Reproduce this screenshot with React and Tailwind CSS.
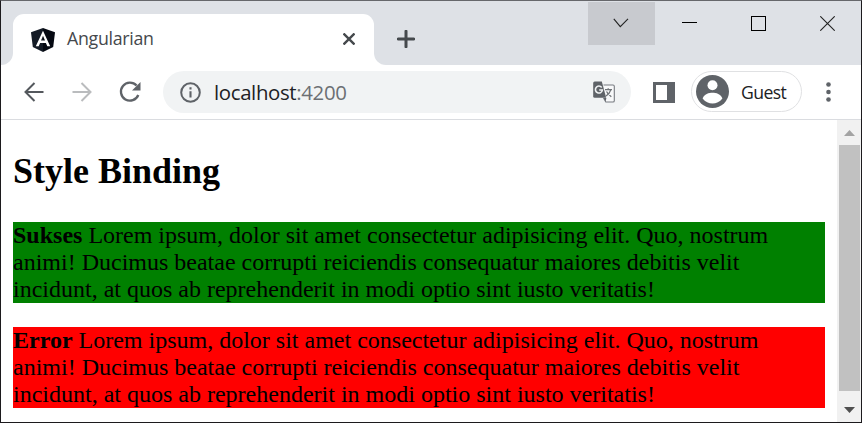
import React from "react";

const LOREM_TEXT =
  "Lorem ipsum, dolor sit amet consectetur adipisicing elit. Quo, nostrum animi! Ducimus beatae corrupti reiciendis consequatur maiores debitis velit incidunt, at quos ab reprehenderit in modi optio sint iusto veritatis!";

function AngularLogo() {
  return (
    <svg className="block h-6 w-6" viewBox="0 0 24 24">
      <path d="M12 0 L24 4.2 L22.2 19 L12 24 Z" fill="#050912" />
      <path d="M12 0 L0 4.2 L1.8 19 L12 24 Z" fill="#141b26" />
      <path
        fill="#fff"
        fillRule="evenodd"
        d="M12 2.8 L4.8 18.3 H7.7 L9.1 15 H14.9 L16.3 18.3 H19.2 Z M12 7.8 L14 12.6 H10 Z"
      />
    </svg>
  );
}

function TabStrip() {
  return (
    <div className="flex h-16 items-start bg-[#dee1e6]">
      <div className="flex h-16 w-3 items-end bg-white">
        <div className="h-16 w-3 rounded-br-[12px] bg-[#dee1e6]" />
      </div>
      <div className="mt-[13px] flex h-[51px] w-[361px] items-center rounded-t-[11px] bg-white pl-[18px] pr-[19px]">
        <AngularLogo />
        <span className="-mt-[3px] ml-[12px] flex-1 text-[17.8px] leading-6 tracking-[-0.3px] text-[#45484c]">Angularian</span>
        <svg className="-mt-px block h-3 w-3" viewBox="0 0 12 12" stroke="#45494d" strokeWidth="2.4">
          <path d="M0.5 0.5 L11.5 11.5 M11.5 0.5 L0.5 11.5" />
        </svg>
      </div>
      <div className="h-16 flex-1 bg-white">
        <div className="flex h-16 items-start rounded-bl-[12px] bg-[#dee1e6]">
          <svg className="ml-[23px] mt-[29px] block h-[18px] w-[18px]" viewBox="0 0 18 18" stroke="#45494d" strokeWidth="3" strokeLinecap="round">
            <path d="M1.2 9 H16.8 M9 1.2 V16.8" />
          </svg>
          <div className="ml-auto mt-px flex h-[43px] items-start">
            <div className="flex h-[43px] w-[67px] justify-center bg-[#c8cacf] pt-4">
              <svg className="-ml-px block h-[10px] w-4" viewBox="0 0 16 10" fill="none" stroke="#222" strokeWidth="1.1">
                <path d="M0.8 0.8 L7.3 8.6 L15 0.8" />
              </svg>
            </div>
            <div className="ml-[27px] mt-5 h-px w-[15px] bg-black" />
            <div className="ml-[54px] mt-[14px] h-[15px] w-[15px] border border-black" />
            <svg className="ml-[54px] mr-[26px] mt-[14px] block h-[15px] w-[15px]" viewBox="0 0 15 15" stroke="#222" strokeWidth="1.1">
              <path d="M0.3 0.3 L14.7 14.7 M14.7 0.3 L0.3 14.7" />
            </svg>
          </div>
        </div>
      </div>
    </div>
  );
}

function ArrowIcon({ className }) {
  return (
    <svg className={className} viewBox="0 0 20 20" fill="none" stroke="currentColor" strokeWidth="2">
      <path d="M19.5 10 H1.8 M10.5 1 L1.5 10 L10.5 19" />
    </svg>
  );
}

function TranslateIcon() {
  return (
    <svg className="block h-[22px] w-[22px]" viewBox="0 0 22 22">
      <path d="M10.5 4 H20 Q21.3 4 21.3 5.3 V19.7 Q21.3 21 20 21 H12.8 L10.5 17" fill="#f8f9fa" stroke="#777b80" strokeWidth="1.1" />
      <path d="M1.7 0.5 H8.8 L13.2 16.8 H1.7 Q0.2 16.8 0.2 15.3 V2 Q0.2 0.5 1.7 0.5 Z" fill="#5f6368" />
      <path d="M10.7 17 H13.4 L12.6 20.6 Z" fill="#5f6368" />
      <path d="M8.7 6.4 A3.5 3.5 0 1 0 9.4 9 H6.2" fill="none" stroke="#f1f3f4" strokeWidth="1.6" />
      <path d="M12 8.7 H19 M15.2 7.2 V8.7 M17.8 8.9 Q16.8 12.5 13 15 M13.5 10.5 Q15 13 18.3 15.8" fill="none" stroke="#6f7377" strokeWidth="1.3" />
    </svg>
  );
}

function Toolbar() {
  return (
    <div className="flex h-[55px] items-center border-b border-[#dadce0] bg-white">
      <ArrowIcon className="-mt-px ml-[23px] block h-5 w-5 text-[#54585d]" />
      <ArrowIcon className="-mt-px ml-[28px] block h-5 w-5 rotate-180 text-[#babcbe]" />
      <svg className="-mt-px ml-[27px] block h-[22px] w-[22px]" viewBox="0 0 22 22">
        <path d="M17.6 4.6 A9 9 0 1 0 19.3 14" fill="none" stroke="#5f6368" strokeWidth="2.3" />
        <path d="M21.5 1 V9.5 H13 Z" fill="#5f6368" />
      </svg>
      <div className="ml-[22px] flex h-[42px] w-[468px] items-center rounded-full bg-[#f1f3f4] pl-[17px] pr-4">
        <svg className="block h-[21px] w-[21px]" viewBox="0 0 21 21">
          <circle cx="10.5" cy="10.5" r="9.3" fill="none" stroke="#5f6368" strokeWidth="2" />
          <path d="M10.5 9.3 V15.5 M10.5 5.3 V7.5" stroke="#5f6368" strokeWidth="2.1" />
        </svg>
        <span className="ml-[13px] flex-1 text-[20.4px] leading-7 tracking-[-0.35px] text-[#202124]">
          localhost<span className="text-[#6b6f73]">:4200</span>
        </span>
        <TranslateIcon />
      </div>
      <div className="ml-[22px] h-[21px] w-[22px] border-y-[3px] border-l-[3px] border-r-[8px] border-[#5f6368]" />
      <div className="-mt-px ml-[16px] flex h-[41px] w-[111px] items-center rounded-full border-[1.5px] border-[#e0e1e3] pl-[4px]">
        <svg className="block h-[33px] w-[33px]" viewBox="0 0 33 33">
          <circle cx="16.5" cy="16.5" r="16.5" fill="#5f6368" />
          <circle cx="16.5" cy="10.2" r="5" fill="#fff" />
          <path d="M6.6 23.5 C8 19 13 17.8 16.5 17.8 C20 17.8 25 19 26.4 23.5 C24 27 20 28.4 16.5 28.4 C13 28.4 9 27 6.6 23.5 Z" fill="#fff" />
        </svg>
        <span className="ml-[12px] text-[17.6px] leading-6 tracking-[-0.6px] text-[#202124]">Guest</span>
      </div>
      <svg className="-mt-px ml-[24px] block h-[20px] w-[5px]" viewBox="0 0 5 20" fill="#5f6368">
        <circle cx="2.5" cy="2.5" r="2.3" />
        <circle cx="2.5" cy="10" r="2.3" />
        <circle cx="2.5" cy="17.5" r="2.3" />
      </svg>
    </div>
  );
}

function Scrollbar() {
  return (
    <div className="flex w-6 flex-col items-center bg-[#f1f1f1]">
      <div className="flex h-[25px] items-center">
        <svg className="block h-[6px] w-[11px]" viewBox="0 0 11 6">
          <path d="M0 6 L5.5 0 L11 6 Z" fill="#a3a3a3" />
        </svg>
      </div>
      <div className="ml-px h-[246px] w-[21px] bg-[#c1c1c1]" />
      <div className="flex flex-1 items-center pt-[6px]">
        <svg className="block h-[6px] w-[11px]" viewBox="0 0 11 6">
          <path d="M0 0 L5.5 6 L11 0 Z" fill="#505050" />
        </svg>
      </div>
    </div>
  );
}

function Alert({ label, className }) {
  return (
    <p className={className}>
      <b className="font-bold">{label}</b> {LOREM_TEXT}
    </p>
  );
}

export default function App() {
  return (
    <div className="flex h-[423px] w-[862px] flex-col overflow-hidden border border-[#1c1a1d] border-t-[#66676b] bg-white font-['Open_Sans','Noto_Sans',sans-serif]">
      <TabStrip />
      <Toolbar />
      <div className="flex min-h-0 flex-1">
        <main className="flex-1 pl-3 pr-3 font-['Liberation_Serif','Times_New_Roman',serif] text-2xl leading-[27px] text-black">
          <h2 className="mt-[31px] text-[36px] font-bold leading-[41px]">Style Binding</h2>
          <Alert label="Sukses" className="mt-[30px] bg-[#008000]" />
          <Alert label="Error" className="mt-6 bg-[#ff0000]" />
        </main>
        <Scrollbar />
      </div>
    </div>
  );
}
